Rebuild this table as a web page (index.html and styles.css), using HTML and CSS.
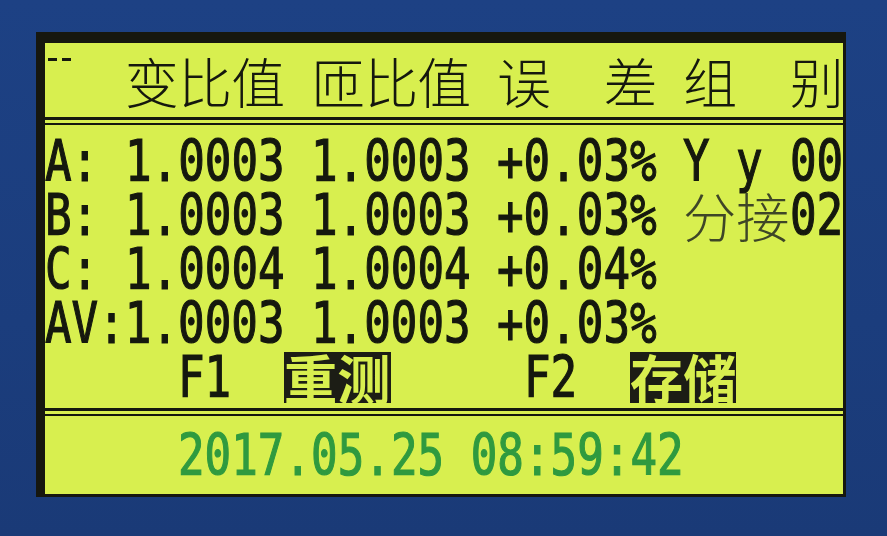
FILE: index.html
```html
<!DOCTYPE html>
<html lang="zh-CN">
<head>
<meta charset="utf-8">
<title>LCD</title>
<link rel="stylesheet" href="styles.css">
</head>
<body>
<div class="bezel">
  <div class="lcd">
    <div class="row hdr">
      <span class="dash c0"><i></i><i></i></span>
      <span class="cn c3">变比值</span>
      <span class="cn c10">匝比值</span>
      <span class="cn c17">误</span>
      <span class="cn c21">差</span>
      <span class="cn c24">组</span>
      <span class="cn c28">别</span>
    </div>
    <div class="rule"></div>
    <div class="data">
      <div class="row line">
        <span class="num c0">A:</span>
        <span class="num c3">1.0003</span>
        <span class="num c10">1.0003</span>
        <span class="num c17">+0.03%</span>
        <span class="num c24">Y</span>
        <span class="num c26">y</span>
        <span class="num c28">00</span>
      </div>
      <div class="row line">
        <span class="num c0">B:</span>
        <span class="num c3">1.0003</span>
        <span class="num c10">1.0003</span>
        <span class="num c17">+0.03%</span>
        <span class="cn-s thin c24">分接</span>
        <span class="num c28">02</span>
      </div>
      <div class="row line">
        <span class="num c0">C:</span>
        <span class="num c3">1.0004</span>
        <span class="num c10">1.0004</span>
        <span class="num c17">+0.04%</span>
      </div>
      <div class="row line">
        <span class="num c0">AV:1.0003</span>
        <span class="num c10">1.0003</span>
        <span class="num c17">+0.03%</span>
      </div>
      <div class="row line keys">
        <span class="num c5">F1</span>
        <span class="inv c9"><span class="cn-s">重测</span></span>
        <span class="num c18">F2</span>
        <span class="inv c22"><span class="cn-s">存储</span></span>
      </div>
    </div>
    <div class="rule rule-low"></div>
    <div class="row date">
      <span class="num c5">2017.05.25 08:59:42</span>
    </div>
  </div>
</div>
</body>
</html>
```

FILE: styles.css
```css
html, body {
  margin: 0;
  padding: 0;
}
body {
  width: 887px;
  height: 536px;
  overflow: hidden;
  background: linear-gradient(180deg, #1d4184 0%, #1b3d7d 60%, #1a3a77 100%);
}
.bezel {
  margin: 32px 0 0 36px;
  width: 798px;
  height: 451px;
  border-left: 9px solid #16170f;
  border-top: 11px solid #16170f;
  border-right: 3px solid #16170f;
  border-bottom: 3px solid #16170f;
}
.lcd {
  width: 798px;
  height: 451px;
  background: #d8ef4f;
  display: flex;
  flex-direction: column;
  color: #15180e;
}
.row {
  display: grid;
  grid-template-columns: repeat(30, 26.6px);
  align-items: center;
}
.hdr {
  height: 74px;
  padding-top: 2px;
  box-sizing: border-box;
}
.rule {
  height: 3px;
  border-top: 3px solid #15180e;
  border-bottom: 2px solid #15180e;
  flex: none;
}
.rule-low {
  margin-top: 6px;
}
.data {
  padding-top: 9px;
  display: flex;
  flex-direction: column;
}
.line {
  height: 54px;
}
.keys {
  height: 52px;
}
.date {
  flex: 1;
  color: #2f9a3f;
}
.num {
  font-family: "DejaVu Sans Mono", monospace;
  font-weight: normal;
  font-size: 46px;
  line-height: 54px;
  white-space: pre;
  transform: scale(0.961, 1.245);
  transform-origin: 0 50%;
  -webkit-text-stroke: 1px currentColor;
}
.cn {
  font-family: "Noto Sans CJK SC", sans-serif;
  font-size: 54px;
  letter-spacing: -0.8px;
  line-height: 54px;
  white-space: pre;
  font-weight: 300;
}
.cn-s {
  display: block;
  font-family: "Noto Sans CJK SC", sans-serif;
  font-size: 37px;
  line-height: 37px;
  white-space: pre;
  transform: scale(1.438);
  transform-origin: 0 50%;
}
.thin {
  font-weight: 300;
  color: #3e4627;
}
.inv {
  background: #1c1d15;
  color: #d8ef4f;
  height: 51px;
  width: 106.4px;
  display: flex;
  align-items: center;
}
.inv .cn-s {
  font-weight: 700;
}
.dash {
  display: flex;
  gap: 5px;
  align-self: start;
  margin-top: 13px;
  padding-left: 3px;
}
.dash i {
  display: block;
  width: 9px;
  height: 3px;
  background: #15180e;
}
.c0 { grid-column-start: 1; }
.c3 { grid-column-start: 4; }
.c5 { grid-column-start: 6; }
.c9 { grid-column-start: 10; }
.c10 { grid-column-start: 11; }
.c17 { grid-column-start: 18; }
.c18 { grid-column-start: 19; }
.c21 { grid-column-start: 22; }
.c22 { grid-column-start: 23; }
.c24 { grid-column-start: 25; }
.c26 { grid-column-start: 27; }
.c28 { grid-column-start: 29; }
```
